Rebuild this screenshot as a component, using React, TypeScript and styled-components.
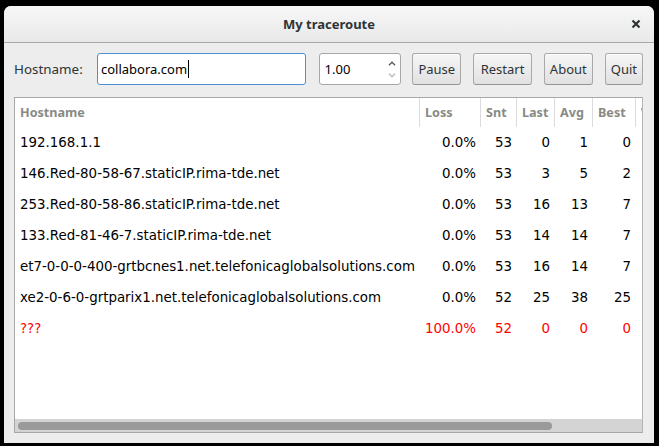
import { FC } from "react"
import styled, { createGlobalStyle } from "styled-components"

const GlobalStyle = createGlobalStyle`
    html, body {
        margin: 0;
        padding: 0;
        background: #000;
    }
    body {
        font-family: "Noto Sans", "DejaVu Sans", sans-serif;
        font-size: 13px;
        color: #2e3436;
    }
`

export const Screen = styled.div`
    box-sizing: border-box;
    width: 659px;
    height: 446px;
    padding: 6px 5px 3px 4px;
    background: #000;
    display: flex;
`

export const Window = styled.div`
    flex: 1;
    display: flex;
    flex-direction: column;
    background: #ededed;
    border-radius: 7px 7px 0 0;
    overflow: hidden;
`

export const TitleBar = styled.div`
    height: 36px;
    flex: 0 0 auto;
    display: grid;
    grid-template-columns: 1fr auto 1fr;
    align-items: center;
    background: linear-gradient(to bottom, #f7f7f7, #e9e9e9);
    border-bottom: 1px solid #a8a8a8;
`

export const Title = styled.div`
    grid-column: 2;
    font-weight: bold;
    font-size: 13px;
    color: #2e3436;
`

export const CloseButton = styled.div`
    grid-column: 3;
    justify-self: end;
    display: flex;
    width: 12px;
    height: 12px;
    margin-right: 12px;
    align-items: center;
    justify-content: center;
`

export const Content = styled.div`
    flex: 1;
    display: flex;
    flex-direction: column;
    padding: 10px 11px 10px 10px;
    min-height: 0;
`

export const Toolbar = styled.div`
    display: flex;
    align-items: center;
    height: 32px;
`

export const Label = styled.span`
    flex: 0 0 83px;
    font-size: 13.4px;
    color: #2e3436;
`

export const Entry = styled.div`
    box-sizing: border-box;
    width: 209px;
    height: 32px;
    display: flex;
    align-items: center;
    padding-left: 3px;
    background: #fff;
    border: 1px solid #4a90d9;
    border-radius: 3px;
    color: #000;
`

export const Cursor = styled.span`
    display: inline-block;
    width: 1px;
    height: 18px;
    margin-left: 1px;
    background: #000;
`

export const Spin = styled.div`
    box-sizing: border-box;
    width: 83px;
    height: 32px;
    margin-left: 13px;
    display: flex;
    background: #fff;
    border: 1px solid #a8a8a8;
    border-radius: 3px;
`

export const SpinValue = styled.div`
    flex: 1;
    display: flex;
    align-items: center;
    padding-left: 5px;
    color: #000;
`

export const SpinArrows = styled.div`
    width: 17px;
    display: flex;
    flex-direction: column;
    align-items: center;
    justify-content: space-around;
    padding: 3px 0;
`

export const Buttons = styled.div`
    display: flex;
    gap: 12px;
    margin-left: 11px;
`

export const Button = styled.button<{ $wide?: boolean }>`
    box-sizing: border-box;
    height: 32px;
    padding: 0 ${(p) => (p.$wide ? "6.5px" : "5px")};
    font-family: inherit;
    font-size: 13px;
    color: #2e3436;
    background: linear-gradient(to bottom, #f6f6f6, #e1e1e1);
    border: 1px solid #a9a9a9;
    border-bottom-color: #959595;
    border-radius: 3px;
    box-shadow: inset 0 1px #fff;
`

export const TreeFrame = styled.div`
    flex: 1;
    margin-top: 12px;
    display: flex;
    flex-direction: column;
    background: #fff;
    border: 1px solid #a8a8a8;
    border-right-color: #b5b5b5;
    overflow: hidden;
    min-height: 0;
`

const columns = "405px 61px 36px 38px 38px 43px 80px"

export const HeaderRow = styled.div`
    display: grid;
    grid-template-columns: ${columns};
    height: 29px;
    flex: 0 0 auto;
`

export const HeaderCell = styled.div`
    display: flex;
    align-items: center;
    padding-left: 5px;
    font-weight: bold;
    font-size: 12.6px;
    color: #888a85;
    border-right: 1px solid #dcdcdc;
    white-space: nowrap;
    overflow: hidden;
`

export const Rows = styled.div`
    flex: 1;
    overflow: hidden;
    font-family: "DejaVu Sans", "Noto Sans", sans-serif;
    font-size: 13.4px;
`

export const Row = styled.div<{ $lost?: boolean }>`
    display: grid;
    grid-template-columns: ${columns};
    height: 31px;
    color: ${(p) => (p.$lost ? "#ff0000" : "#000")};
`

export const Cell = styled.div<{ $num?: boolean }>`
    display: flex;
    align-items: center;
    justify-content: ${(p) => (p.$num ? "flex-end" : "flex-start")};
    padding: ${(p) => (p.$num ? "0 5px 0 0" : "0 0 0 5px")};
    white-space: nowrap;
`

export const Trough = styled.div`
    flex: 0 0 auto;
    height: 13px;
    display: flex;
    align-items: center;
    padding: 0 3px;
    background: #d4d4d4;
`

export const Slider = styled.div`
    width: 534px;
    height: 8px;
    border-radius: 4px;
    background: #9a9a9a;
`

interface Hop {
    host: string
    loss: string
    snt: number
    last: number
    avg: number
    best: number
}

const hops: Hop[] = [
    { host: "192.168.1.1", loss: "0.0%", snt: 53, last: 0, avg: 1, best: 0 },
    { host: "146.Red-80-58-67.staticIP.rima-tde.net", loss: "0.0%", snt: 53, last: 3, avg: 5, best: 2 },
    { host: "253.Red-80-58-86.staticIP.rima-tde.net", loss: "0.0%", snt: 53, last: 16, avg: 13, best: 7 },
    { host: "133.Red-81-46-7.staticIP.rima-tde.net", loss: "0.0%", snt: 53, last: 14, avg: 14, best: 7 },
    { host: "et7-0-0-0-400-grtbcnes1.net.telefonicaglobalsolutions.com", loss: "0.0%", snt: 53, last: 16, avg: 14, best: 7 },
    { host: "xe2-0-6-0-grtparix1.net.telefonicaglobalsolutions.com", loss: "0.0%", snt: 52, last: 25, avg: 38, best: 25 },
    { host: "???", loss: "100.0%", snt: 52, last: 0, avg: 0, best: 0 },
]

const headers = ["Hostname", "Loss", "Snt", "Last", "Avg", "Best", "Wrst"]

const Chevron: FC<{ up?: boolean; color: string }> = ({ up, color }) => (
    <svg width="8" height="5" viewBox="0 0 8 5">
        <path
            d={up ? "M1 4.2 L4 1.2 L7 4.2" : "M1 0.8 L4 3.8 L7 0.8"}
            fill="none"
            stroke={color}
            strokeWidth="1.3"
        />
    </svg>
)

const App: FC = () => {
    return (
        <Screen>
            <GlobalStyle />
            <Window>
                <TitleBar>
                    <Title>My traceroute</Title>
                    <CloseButton>
                        <svg width="10" height="10" viewBox="0 0 10 10">
                            <path d="M1.5 1.5 L8.5 8.5 M8.5 1.5 L1.5 8.5" stroke="#2e3436" strokeWidth="2.2" />
                        </svg>
                    </CloseButton>
                </TitleBar>
                <Content>
                    <Toolbar>
                        <Label>Hostname:</Label>
                        <Entry>
                            collabora.com<Cursor />
                        </Entry>
                        <Spin>
                            <SpinValue>1.00</SpinValue>
                            <SpinArrows>
                                <Chevron up color="#555753" />
                                <Chevron color="#b8b8b8" />
                            </SpinArrows>
                        </Spin>
                        <Buttons>
                            <Button>Pause</Button>
                            <Button $wide>Restart</Button>
                            <Button>About</Button>
                            <Button>Quit</Button>
                        </Buttons>
                    </Toolbar>
                    <TreeFrame>
                        <HeaderRow>
                            {headers.map((h) => (
                                <HeaderCell key={h}>{h}</HeaderCell>
                            ))}
                        </HeaderRow>
                        <Rows>
                            {hops.map((hop) => (
                                <Row key={hop.host} $lost={hop.loss === "100.0%"}>
                                    <Cell>{hop.host}</Cell>
                                    <Cell $num>{hop.loss}</Cell>
                                    <Cell $num>{hop.snt}</Cell>
                                    <Cell $num>{hop.last}</Cell>
                                    <Cell $num>{hop.avg}</Cell>
                                    <Cell $num>{hop.best}</Cell>
                                    <Cell />
                                </Row>
                            ))}
                        </Rows>
                        <Trough>
                            <Slider />
                        </Trough>
                    </TreeFrame>
                </Content>
            </Window>
        </Screen>
    )
}

export default App
